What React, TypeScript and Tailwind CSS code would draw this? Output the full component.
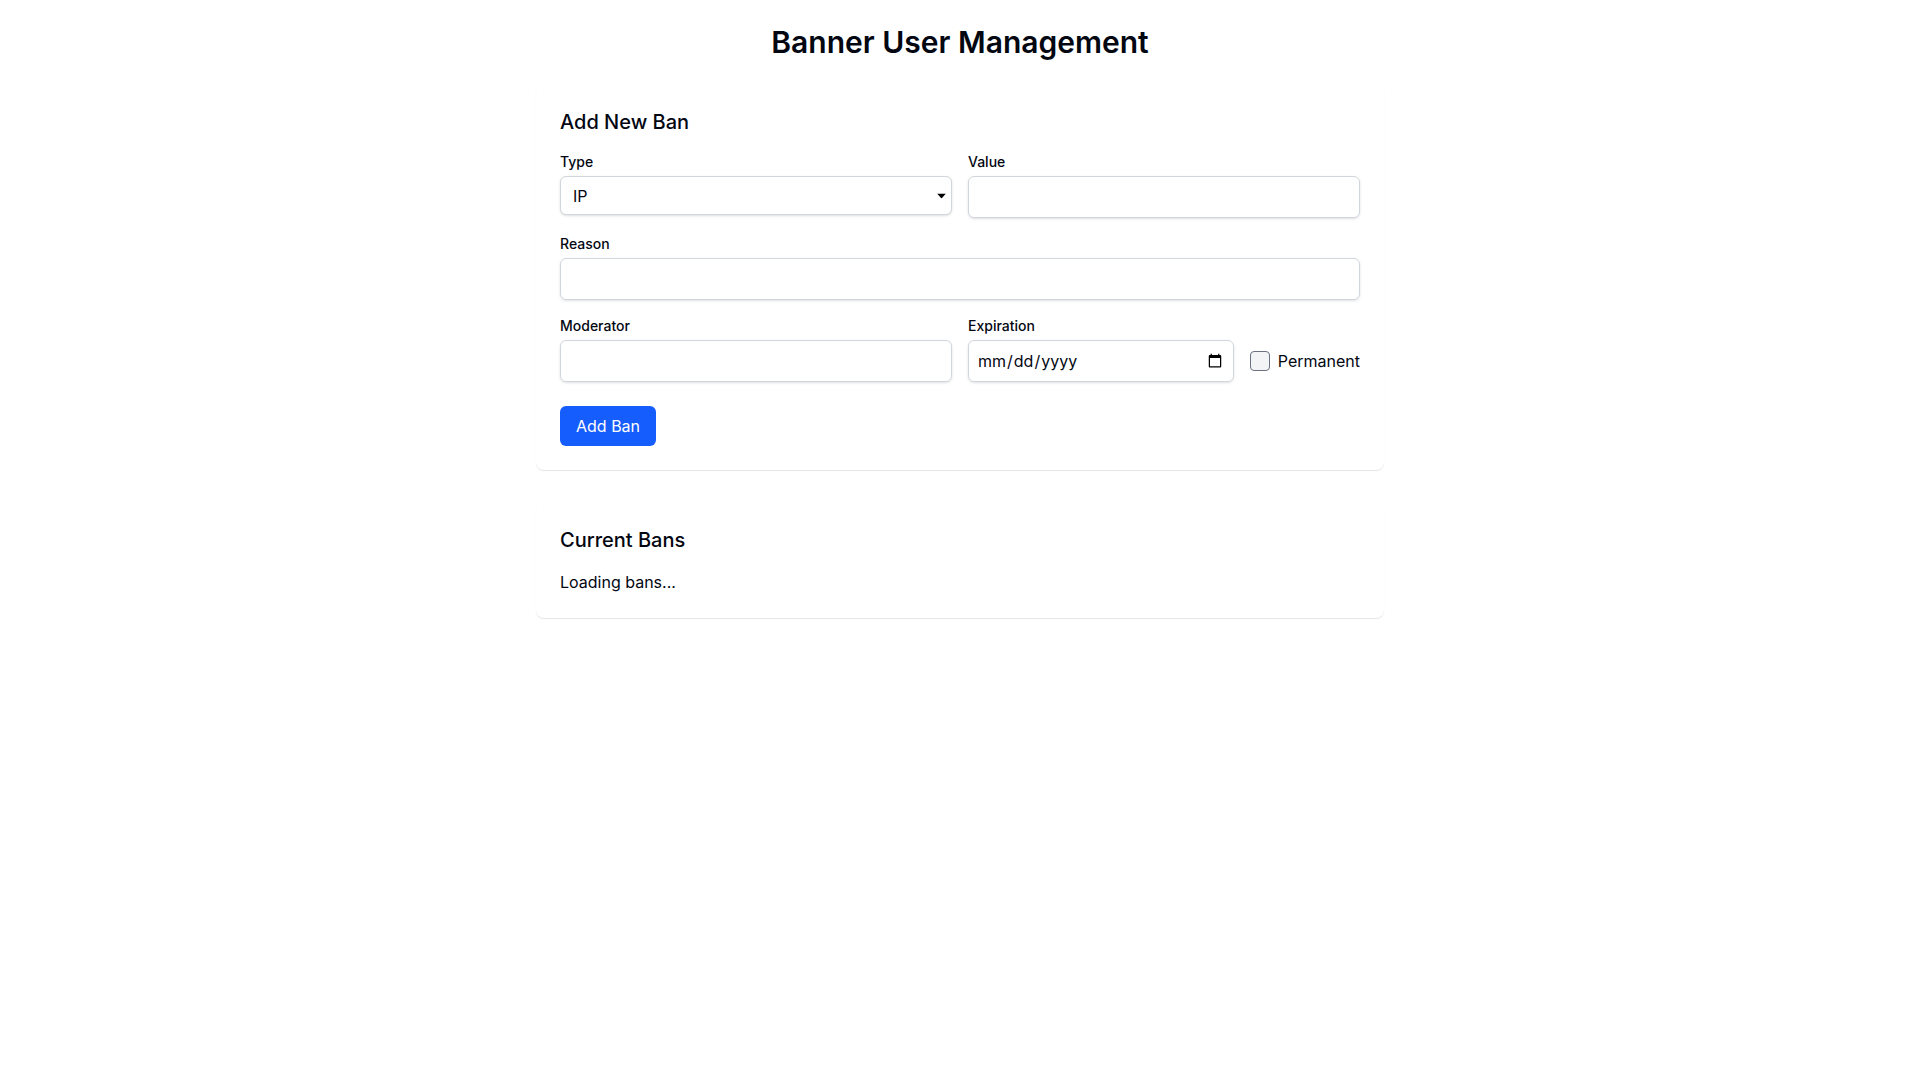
export default function App() {
  return (
    <div className="min-h-screen bg-white text-gray-950" style={{ fontFamily: "Inter, 'Noto Sans', sans-serif" }}>
      <div className="max-w-4xl mx-auto p-6">
        <h1 className="text-3xl font-semibold text-center mb-6">Banner User Management</h1>

        <div className="bg-white rounded-lg shadow-[0_1px_1px_rgba(0,0,0,0.1)] p-6 mb-8">
          <h2 className="text-xl font-medium mb-4">Add New Ban</h2>
          <form className="space-y-4" onSubmit={(e) => e.preventDefault()}>
            <div className="grid grid-cols-2 gap-4">
              <div>
                <label className="block text-sm font-medium mb-1">Type</label>
                <div className="relative">
                  <select className="w-full appearance-none border border-gray-300 rounded-md shadow-sm px-3 py-[6.5px] text-base bg-white">
                    <option>IP</option>
                    <option>User</option>
                  </select>
                  <svg className="absolute right-[6px] top-1/2 -translate-y-1/2 pointer-events-none" width="9" height="5" viewBox="0 0 9 5">
                    <path d="M0 0h9L4.5 5z" fill="#000" />
                  </svg>
                </div>
              </div>
              <div>
                <label className="block text-sm font-medium mb-1">Value</label>
                <input type="text" className="w-full border border-gray-300 rounded-md shadow-sm px-3 py-2 text-base" />
              </div>
            </div>

            <div>
              <label className="block text-sm font-medium mb-1">Reason</label>
              <input type="text" className="w-full border border-gray-300 rounded-md shadow-sm px-3 py-2 text-base" />
            </div>

            <div className="grid grid-cols-2 gap-4">
              <div>
                <label className="block text-sm font-medium mb-1">Moderator</label>
                <input type="text" className="w-full border border-gray-300 rounded-md shadow-sm px-3 py-2 text-base" />
              </div>
              <div>
                <label className="block text-sm font-medium mb-1">Expiration</label>
                <div className="flex items-center gap-4">
                  <input type="date" className="flex-1 border border-gray-300 rounded-md shadow-sm px-2 py-2 text-base" />
                  <label className="flex items-center gap-2 text-base">
                    <input type="checkbox" className="appearance-none w-5 h-5 border border-gray-500 rounded bg-gray-100" />
                    Permanent
                  </label>
                </div>
              </div>
            </div>

            <div className="pt-2">
              <button type="submit" className="bg-blue-600 text-white px-4 py-2 rounded-md text-base">
                Add Ban
              </button>
            </div>
          </form>
        </div>

        <div className="bg-white rounded-lg shadow-[0_1px_1px_rgba(0,0,0,0.1)] p-6">
          <h2 className="text-xl font-medium mb-4">Current Bans</h2>
          <p className="text-base">Loading bans...</p>
        </div>
      </div>
    </div>
  );
}
